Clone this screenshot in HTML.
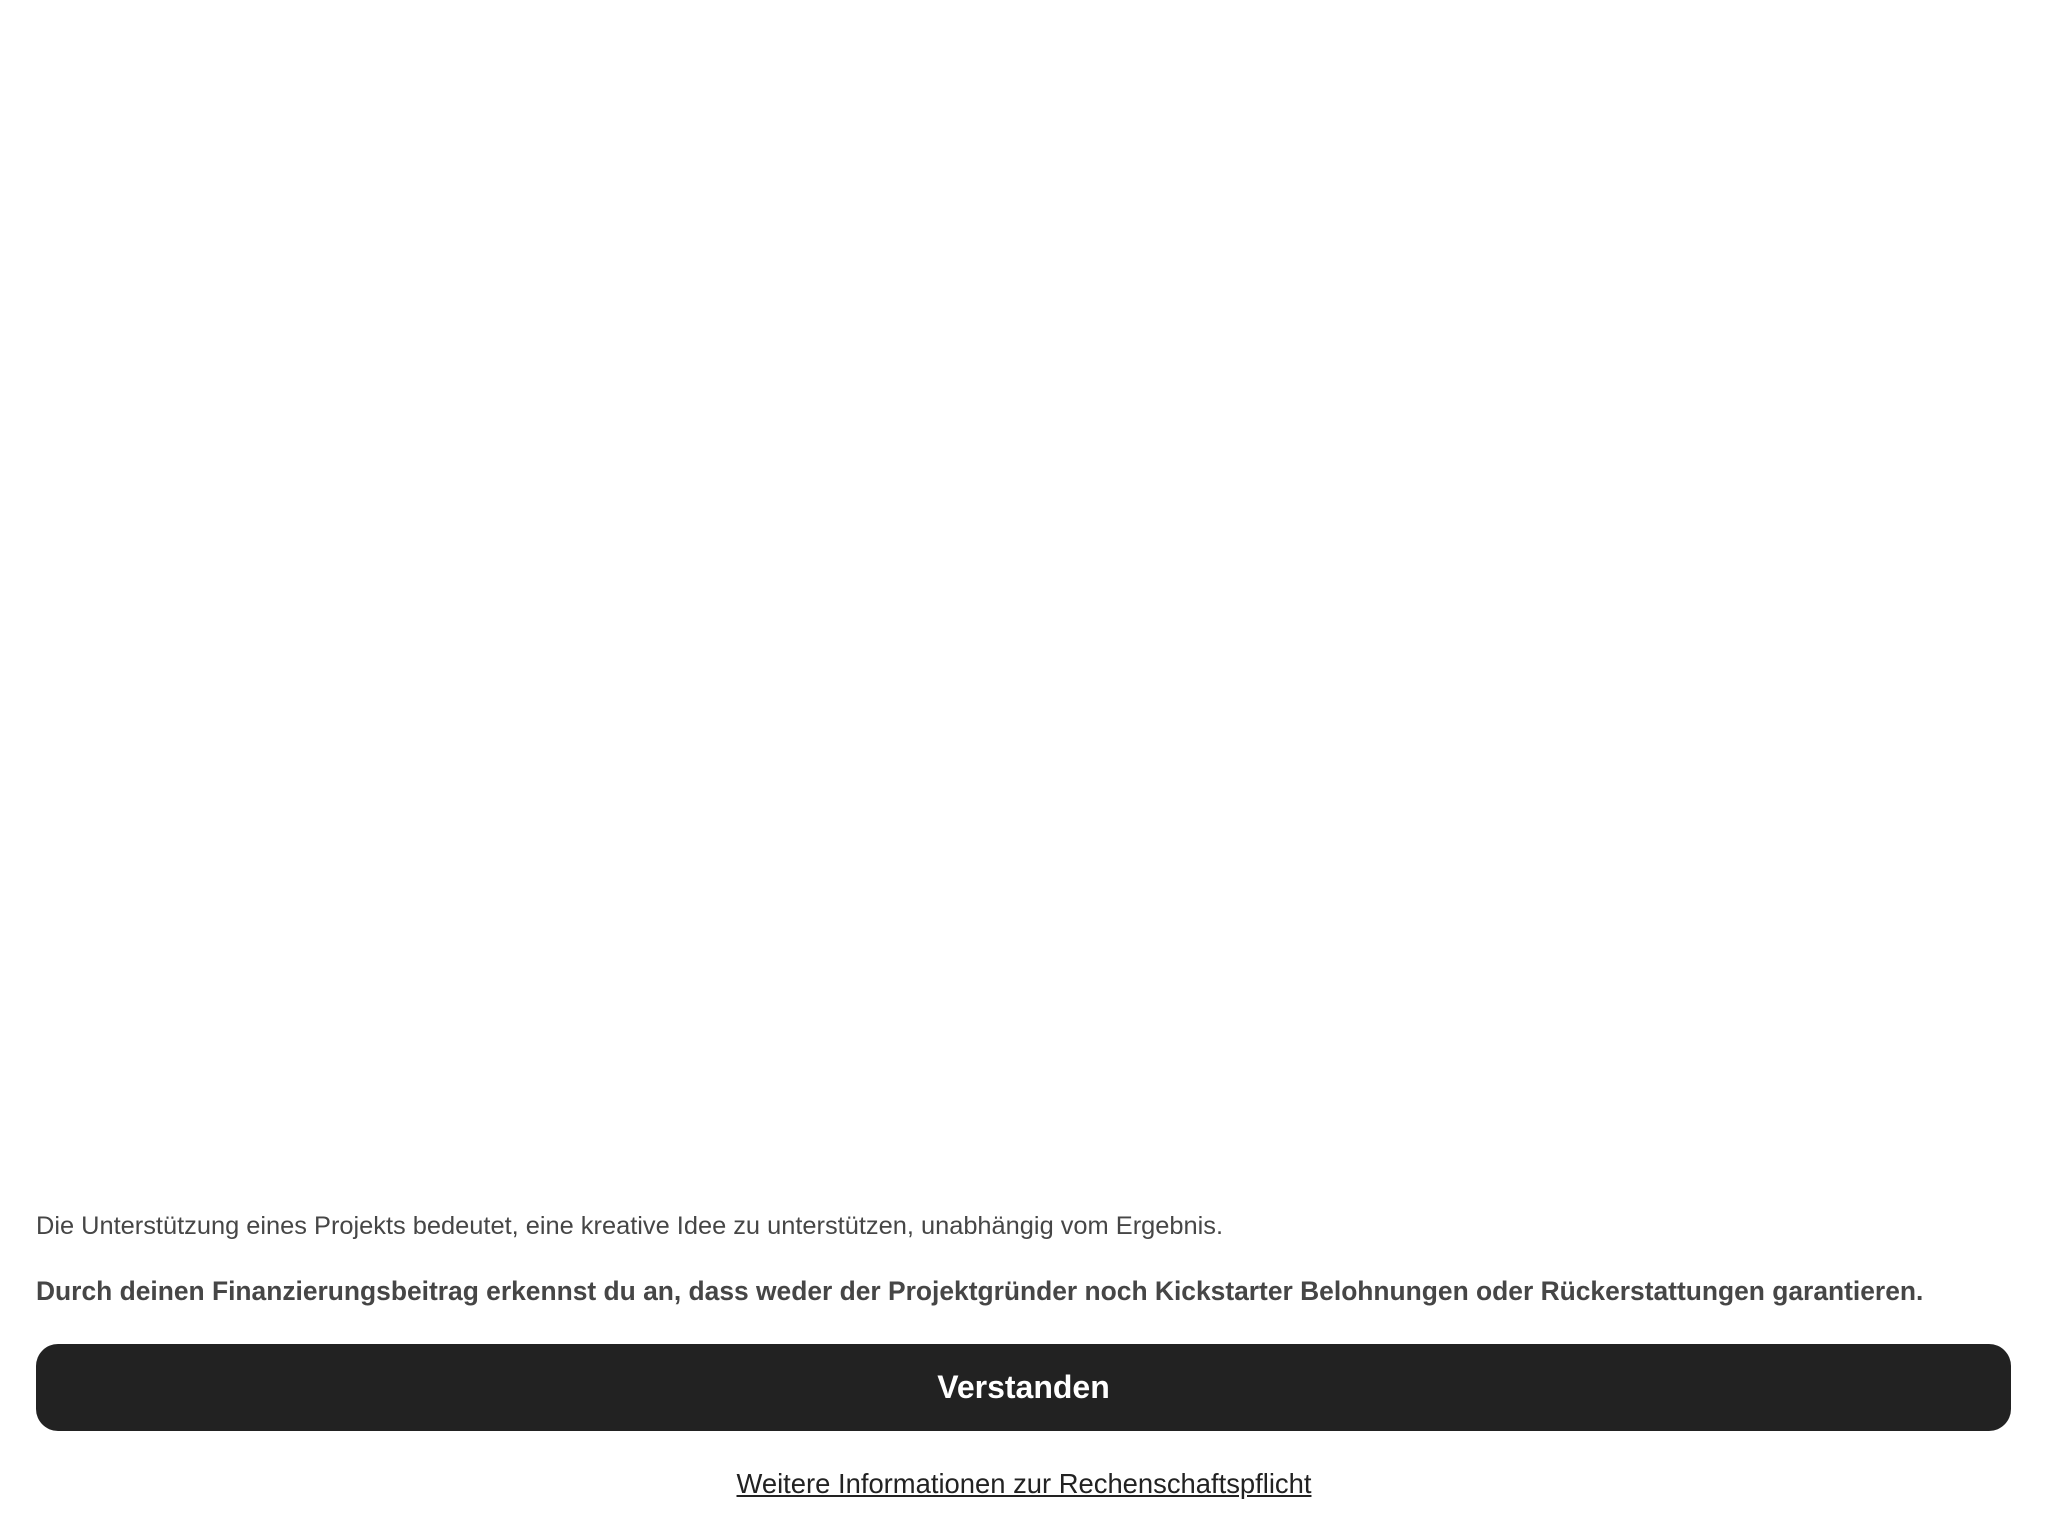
<!DOCTYPE html>
<html><head><meta charset="utf-8"><style>
html,body{margin:0;padding:0;background:#fff;width:2048px;height:1536px;overflow:hidden;font-family:"Liberation Sans",sans-serif;}
.t{position:absolute;left:36px;white-space:nowrap;color:#464646;}
#a{top:1212px;font-size:25.4px;}
#b{top:1276px;font-size:26.4px;font-weight:bold;}
#btn{position:absolute;left:36px;top:1344px;width:1975px;height:87px;background:#222;border-radius:22px;color:#fff;font-size:32px;font-weight:bold;display:flex;align-items:center;justify-content:center;}
#l{position:absolute;top:1468px;left:0;width:2048px;text-align:center;font-size:27.4px;color:#222;text-decoration:underline;}
</style></head><body>
<div class="t" id="a">Die Unterstützung eines Projekts bedeutet, eine kreative Idee zu unterstützen, unabhängig vom Ergebnis.</div>
<div class="t" id="b">Durch deinen Finanzierungsbeitrag erkennst du an, dass weder der Projektgründer noch Kickstarter Belohnungen oder Rückerstattungen garantieren.</div>
<div id="btn">Verstanden</div>
<div id="l">Weitere Informationen zur Rechenschaftspflicht</div>
</body></html>
